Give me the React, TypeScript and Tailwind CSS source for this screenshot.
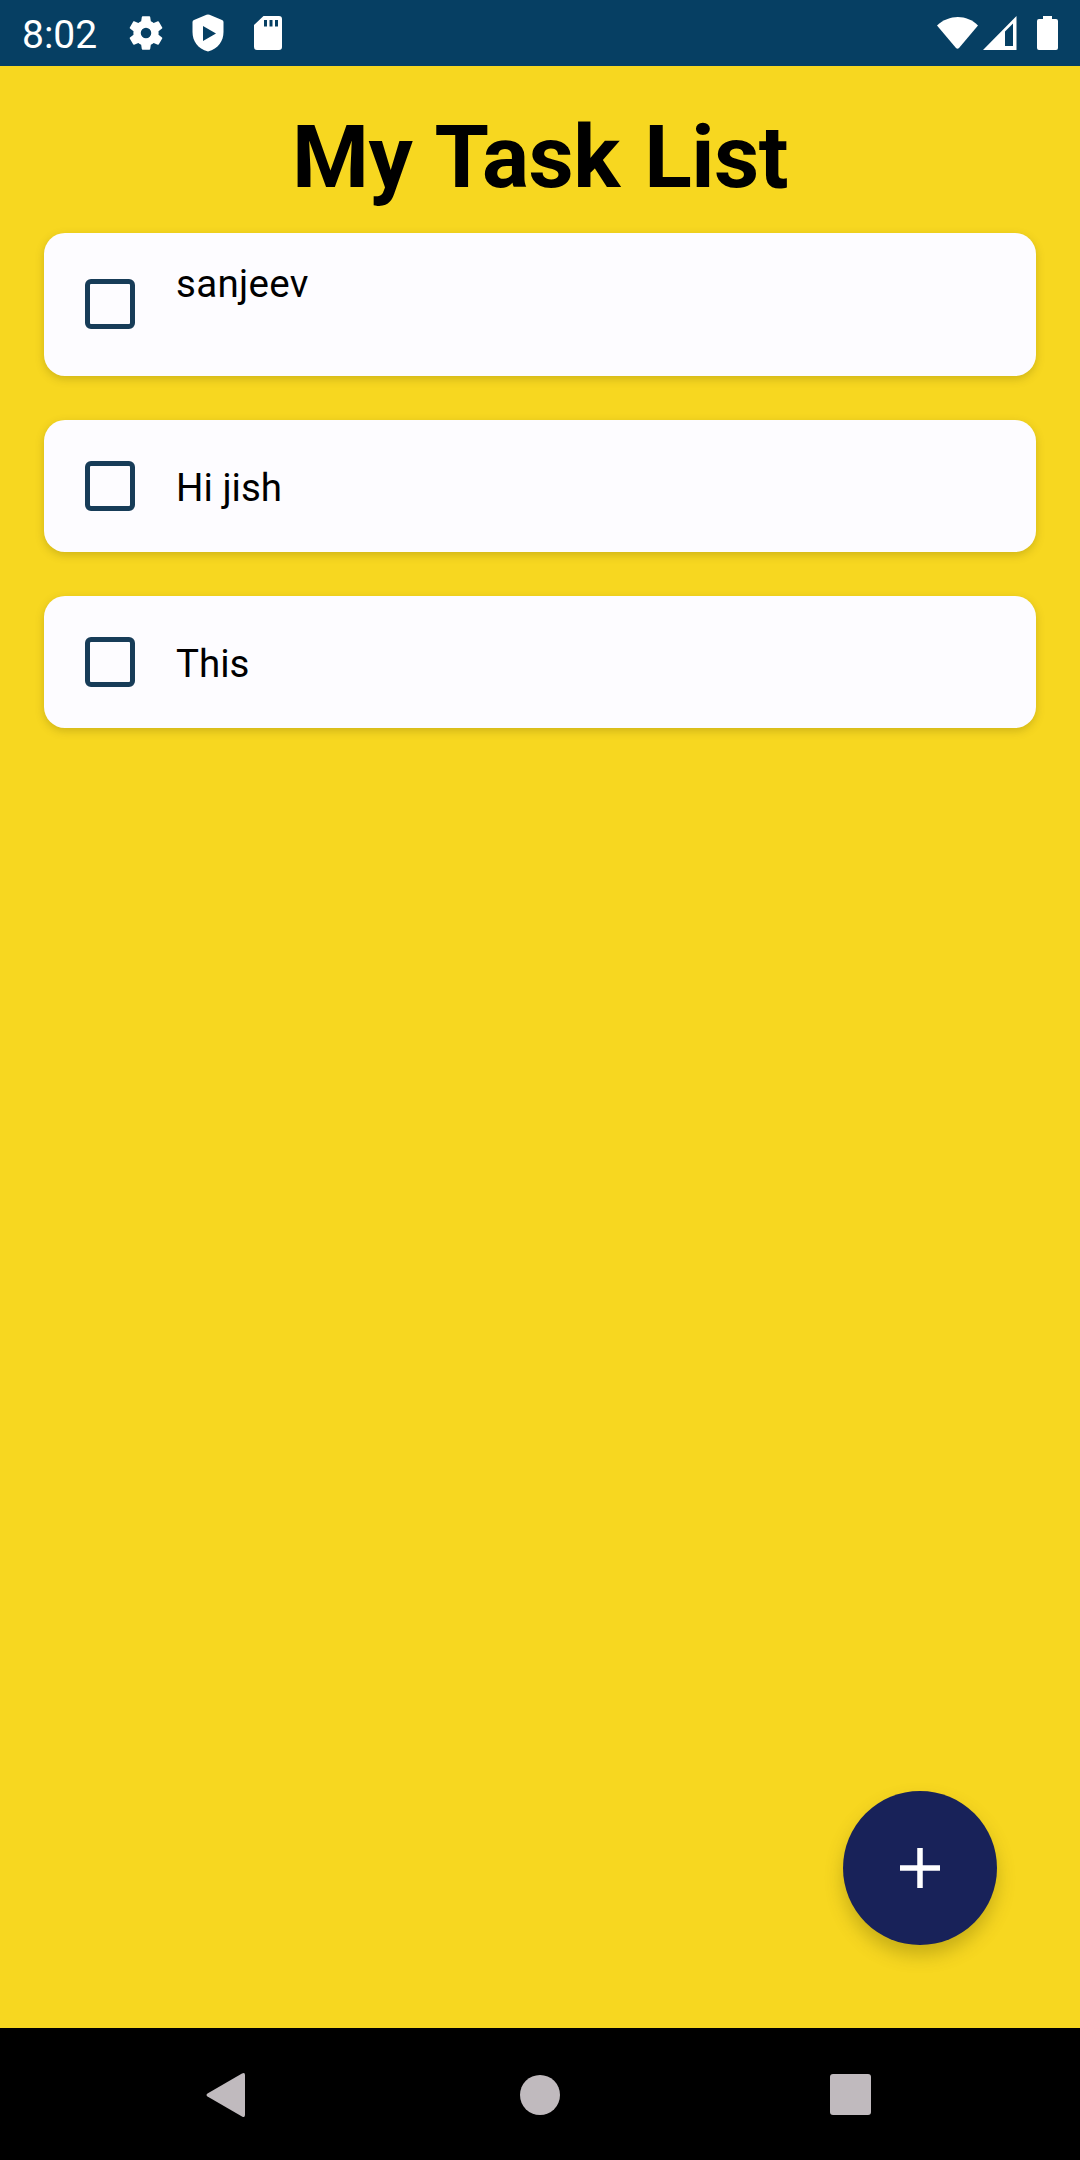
type Task = { label: string; tall?: boolean };

const tasks: Task[] = [
  { label: "sanjeev", tall: true },
  { label: "Hi jish" },
  { label: "This" },
];

function StatusBar() {
  return (
    <header className="flex h-[66px] items-center justify-between bg-[#063f63] pl-[22px] pr-[21px] text-white">
      <div className="flex items-center">
        <span className="mt-[3px] w-[106px] text-[39px] leading-[46px]">8:02</span>
        <svg className="h-[42px] w-[42px] -ml-[3px]" viewBox="0 0 24 24" fill="currentColor">
          <path d="M19.14 12.94c.04-.3.06-.61.06-.94 0-.32-.02-.64-.07-.94l2.03-1.58a.49.49 0 0 0 .12-.61l-1.92-3.32a.488.488 0 0 0-.59-.22l-2.39.96c-.5-.38-1.03-.7-1.62-.94l-.36-2.54a.484.484 0 0 0-.48-.41h-3.84c-.24 0-.43.17-.47.41l-.36 2.54c-.59.24-1.13.57-1.62.94l-2.39-.96c-.22-.08-.47 0-.59.22L2.74 8.87c-.12.21-.08.47.12.61l2.03 1.58c-.05.3-.09.63-.09.94s.02.64.07.94l-2.03 1.58a.49.49 0 0 0-.12.61l1.92 3.32c.12.22.37.29.59.22l2.39-.96c.5.38 1.03.7 1.62.94l.36 2.54c.05.24.24.41.48.41h3.84c.24 0 .44-.17.47-.41l.36-2.54c.59-.24 1.13-.56 1.62-.94l2.39.96c.22.08.47 0 .59-.22l1.92-3.32c.12-.22.07-.47-.12-.61l-2.01-1.58zM12 15a3 3 0 1 1 0-6 3 3 0 0 1 0 6z" />
        </svg>
        <svg className="ml-[24px] h-[38px] w-[34px]" viewBox="0 0 34 38" fill="currentColor" fillRule="evenodd">
          <path d="M15.5.8 3 6Q1.500 6.500 1.500 8v10c0 9 5 16.500 15.500 19.500 10.500-3 15.500-10.500 15.500-19.500V8q0-1.500-1.500-2L18.500.8q-1.500-.6-3 0zM12 12v15l13-7.500z" />
        </svg>
        <svg className="ml-[28px] h-[36px] w-[30px]" viewBox="0 0 30 36" fill="currentColor" fillRule="evenodd">
          <path d="M10.500 1H26q3 0 3 3v28q0 3-3 3H4q-3 0-3-3V10zM11 5v6.500h3V5zM16.500 5v6.500h3V5zM22 5v6.500h3V5z" />
        </svg>
      </div>
      <div className="flex items-center">
        <svg className="h-[34px] w-[44px]" viewBox="0 0 44 34" fill="currentColor">
          <path d="M1 9.500C13-2 31-2 42 9.500L23 32q-1.500 1.500-3 0z" />
        </svg>
        <svg className="ml-[2px] h-[36px] w-[36px]" viewBox="0 0 36 36" fill="currentColor" fillRule="evenodd">
          <path d="M1 35 34.500 1v34zM23 16.500v14.500h8V8.500z" />
        </svg>
        <svg className="ml-[18px] h-[36px] w-[23px]" viewBox="0 0 23 36" fill="currentColor">
          <path d="M7 1h9v3h4q2 0 2 2v27q0 2-2 2H3q-2 0-2-2V6q0-2 2-2h4z" />
        </svg>
      </div>
    </header>
  );
}

function TaskCard({ label, tall }: Task) {
  return (
    <li
      className={
        "flex rounded-[21px] bg-[#fdfcff] pl-[41px] shadow-[0_3px_9px_rgba(90,80,0,0.25)] " +
        (tall ? "h-[143px] items-start pt-[28px]" : "h-[132px] items-center")
      }
    >
      <span
        className={
          "h-[50px] w-[50px] shrink-0 rounded-[6px] border-[5px] border-[#173c58] " +
          (tall ? "mt-[18px]" : "")
        }
      />
      <span
        className={
          "ml-[41px] text-[38.5px] leading-[46px] text-black " +
          (tall ? "tracking-[0.3px]" : "pt-[3px]")
        }
      >
        {label}
      </span>
    </li>
  );
}

function NavigationBar() {
  return (
    <nav className="flex h-[132px] items-center justify-between bg-black pl-[206px] pr-[209px] pt-[1px] text-[#c0babe]">
      <svg className="h-[44px] w-[40px]" viewBox="0 0 40 44" fill="currentColor">
        <path d="M1.500 20.500 36 .5q3-1.500 3 1.500v40q0 3-3 1.500L1.500 23.500q-2-1.500 0-3z" />
      </svg>
      <span className="ml-[3px] h-[40px] w-[40px] rounded-full bg-current" />
      <span className="h-[41px] w-[41px] rounded-[3px] bg-current" />
    </nav>
  );
}

export default function App() {
  return (
    <div className="flex h-[2160px] w-[1080px] flex-col overflow-hidden bg-[#f7d720] font-[Roboto,sans-serif]">
      <StatusBar />
      <main className="flex flex-1 flex-col px-[44px] pt-[39px]">
        <h1 className="h-[128px] text-center text-[88px] font-bold leading-[103px] tracking-[-0.5px] text-black [word-spacing:3px]">
          My Task List
        </h1>
        <ul className="flex flex-col gap-[44px]">
          {tasks.map((task) => (
            <TaskCard key={task.label} {...task} />
          ))}
        </ul>
        <button
          aria-label="Add task"
          className="mb-[83px] mr-[39px] mt-auto flex h-[154px] w-[154px] items-center justify-center self-end rounded-full bg-[#182259] text-white shadow-[0_10px_18px_rgba(90,80,0,0.3)]"
        >
          <svg className="h-[40px] w-[40px]" viewBox="0 0 40 40" fill="none" stroke="currentColor" strokeWidth="5.500">
            <path d="M20 0v40M0 20h40" />
          </svg>
        </button>
      </main>
      <NavigationBar />
    </div>
  );
}
